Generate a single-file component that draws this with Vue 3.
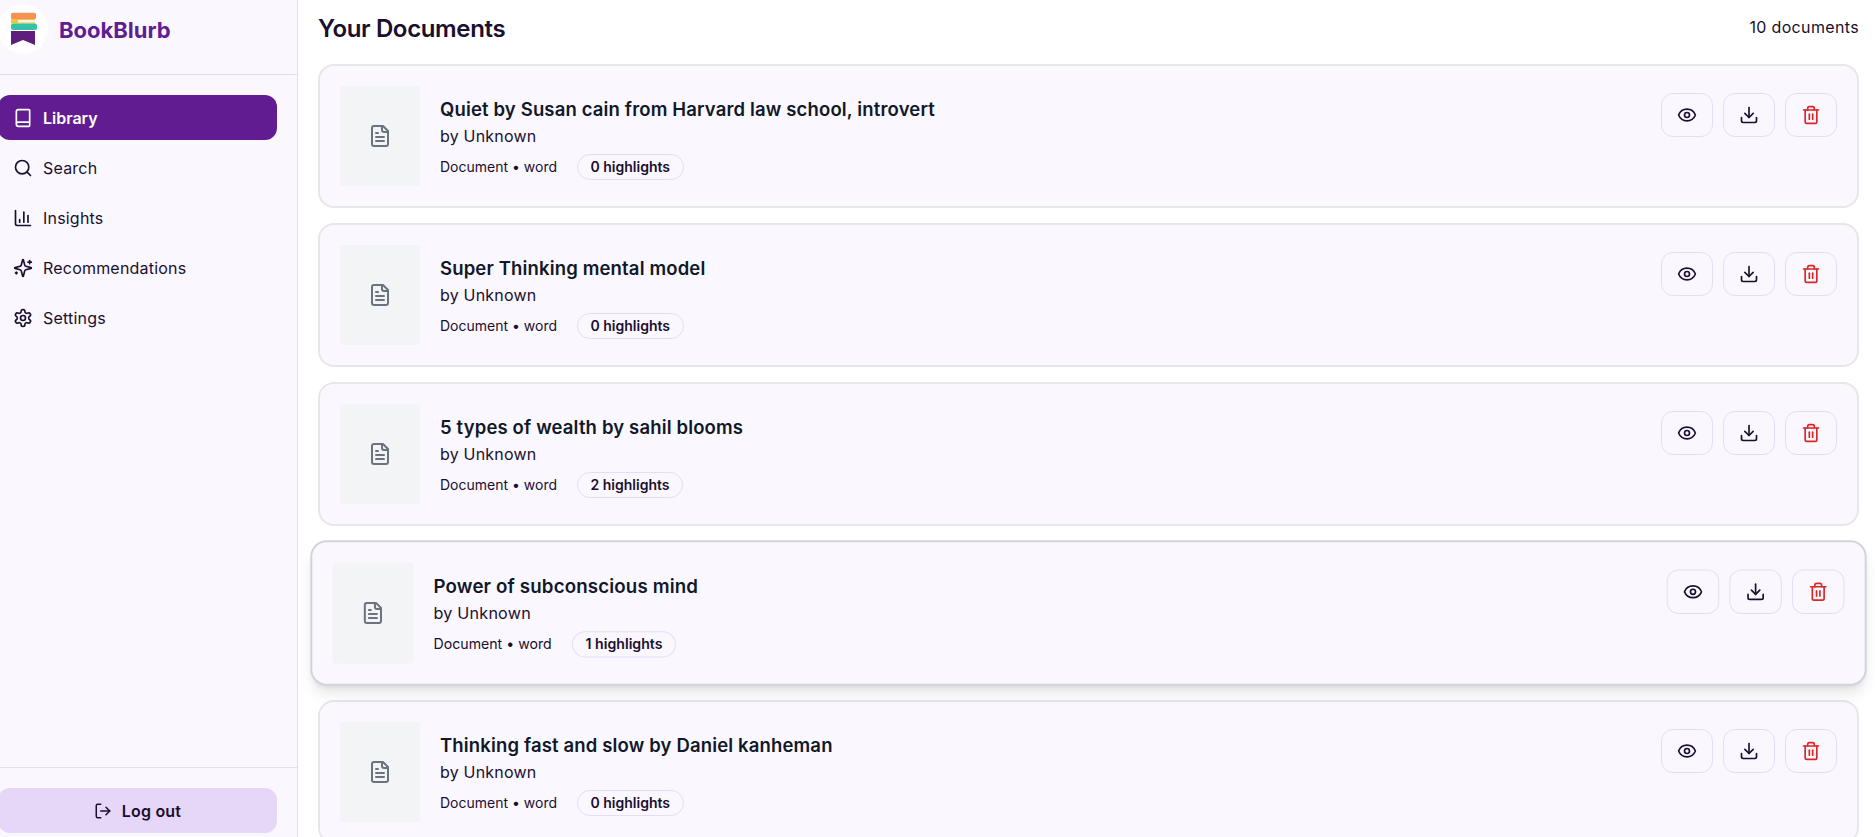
<script setup>
const nav = [
  { label: 'Library', icon: 'book', active: true },
  { label: 'Search', icon: 'search' },
  { label: 'Insights', icon: 'chart' },
  { label: 'Recommendations', icon: 'sparkles' },
  { label: 'Settings', icon: 'settings' }
]

const docs = [
  { title: 'Quiet by Susan cain from Harvard law school, introvert', highlights: 0 },
  { title: 'Super Thinking mental model', highlights: 0 },
  { title: '5 types of wealth by sahil blooms', highlights: 2 },
  { title: 'Power of subconscious mind', highlights: 1, hovered: true },
  { title: 'Thinking fast and slow by Daniel kanheman', highlights: 0 }
]
</script>

<template>
  <div class="layout">
    <aside class="sidebar">
      <div class="brand">
        <div class="logo">
          <svg width="28" height="36" viewBox="0 0 28 36">
            <rect x="2" y="1.700" width="25" height="6.500" rx="1.500" fill="#f79256" />
            <rect x="2" y="8" width="24" height="4.500" rx="1" fill="#f4c430" />
            <rect x="9" y="9" width="17" height="2.500" fill="#f7f3e8" />
            <rect x="2" y="12.500" width="26" height="6.500" rx="2" fill="#35c3a8" />
            <path d="M2 20h24v14l-12-5-12 5z" fill="#5f1d7d" />
          </svg>
        </div>
        <span class="brand-name">BookBlurb</span>
      </div>

      <nav class="nav">
        <a v-for="item in nav" :key="item.label" class="nav-item" :class="{ active: item.active }">
          <svg class="icon" width="20" height="20" viewBox="0 0 24 24">
            <path v-if="item.icon === 'book'" d="M4 19.500v-15A2.500 2.500 0 0 1 6.500 2H19a1 1 0 0 1 1 1v18a1 1 0 0 1-1 1H6.500a1 1 0 0 1 0-5H20" />
            <template v-if="item.icon === 'search'">
              <circle cx="11" cy="11" r="8" />
              <path d="m21 21-4.300-4.300" />
            </template>
            <template v-if="item.icon === 'chart'">
              <path d="M3 3v16a2 2 0 0 0 2 2h16" />
              <path d="M18 17V9" />
              <path d="M13 17V5" />
              <path d="M8 17v-3" />
            </template>
            <template v-if="item.icon === 'sparkles'">
              <path d="M9.937 15.500A2 2 0 0 0 8.500 14.063l-6.135-1.582a.5.5 0 0 1 0-.962L8.500 9.936A2 2 0 0 0 9.937 8.500l1.582-6.135a.5.5 0 0 1 .963 0L14.063 8.500A2 2 0 0 0 15.500 9.937l6.135 1.581a.5.5 0 0 1 0 .964L15.500 14.063a2 2 0 0 0-1.437 1.437l-1.582 6.135a.5.5 0 0 1-.963 0z" />
              <path d="M20 3v4" />
              <path d="M22 5h-4" />
              <path d="M4 17v2" />
              <path d="M5 18H3" />
            </template>
            <template v-if="item.icon === 'settings'">
              <path d="M12.220 2h-.44a2 2 0 0 0-2 2v.18a2 2 0 0 1-1 1.730l-.43.25a2 2 0 0 1-2 0l-.15-.08a2 2 0 0 0-2.730.73l-.22.38a2 2 0 0 0 .73 2.730l.15.1a2 2 0 0 1 1 1.720v.51a2 2 0 0 1-1 1.740l-.15.09a2 2 0 0 0-.73 2.730l.22.38a2 2 0 0 0 2.730.73l.15-.08a2 2 0 0 1 2 0l.43.25a2 2 0 0 1 1 1.730V20a2 2 0 0 0 2 2h.44a2 2 0 0 0 2-2v-.18a2 2 0 0 1 1-1.730l.43-.25a2 2 0 0 1 2 0l.15.08a2 2 0 0 0 2.730-.73l.22-.39a2 2 0 0 0-.73-2.730l-.15-.08a2 2 0 0 1-1-1.740v-.5a2 2 0 0 1 1-1.740l.15-.09a2 2 0 0 0 .73-2.730l-.22-.38a2 2 0 0 0-2.730-.73l-.15.08a2 2 0 0 1-2 0l-.43-.25a2 2 0 0 1-1-1.730V4a2 2 0 0 0-2-2z" />
              <circle cx="12" cy="12" r="3" />
            </template>
          </svg>
          <span>{{ item.label }}</span>
        </a>
      </nav>

      <div class="sidebar-footer">
        <button type="button" class="logout">
          <svg class="icon" width="18" height="18" viewBox="0 0 24 24">
            <path d="M9 21H5a2 2 0 0 1-2-2V5a2 2 0 0 1 2-2h4" />
            <path d="m16 17 5-5-5-5" />
            <path d="M21 12H9" />
          </svg>
          Log out
        </button>
      </div>
    </aside>

    <main class="main">
      <header class="main-head">
        <h1>Your Documents</h1>
        <span class="count">10 documents</span>
      </header>

      <div class="doc-list">
        <article v-for="doc in docs" :key="doc.title" class="doc" :class="{ hovered: doc.hovered }">
          <div class="thumb">
            <svg class="icon" width="24" height="24" viewBox="0 0 24 24">
              <path d="M15 2H6a2 2 0 0 0-2 2v16a2 2 0 0 0 2 2h12a2 2 0 0 0 2-2V7Z" />
              <path d="M14 2v4a2 2 0 0 0 2 2h4" />
              <path d="M10 9H8" />
              <path d="M16 13H8" />
              <path d="M16 17H8" />
            </svg>
          </div>
          <div class="info">
            <h3>{{ doc.title }}</h3>
            <p class="author">by Unknown</p>
            <div class="meta">
              <span>Document • word</span>
              <span class="pill">{{ doc.highlights }} highlights</span>
            </div>
          </div>
          <div class="actions">
            <button type="button" class="action">
              <svg class="icon" width="20" height="20" viewBox="0 0 24 24">
                <path d="M2.062 12.348a1 1 0 0 1 0-.696 10.750 10.750 0 0 1 19.876 0 1 1 0 0 1 0 .696 10.750 10.750 0 0 1-19.876 0" />
                <circle cx="12" cy="12" r="3" />
              </svg>
            </button>
            <button type="button" class="action">
              <svg class="icon" width="20" height="20" viewBox="0 0 24 24">
                <path d="M12 15V3" />
                <path d="M21 15v4a2 2 0 0 1-2 2H5a2 2 0 0 1-2-2v-4" />
                <path d="m7 10 5 5 5-5" />
              </svg>
            </button>
            <button type="button" class="action danger">
              <svg class="icon" width="20" height="20" viewBox="0 0 24 24">
                <path d="M3 6h18" />
                <path d="M19 6v14c0 1-1 2-2 2H7c-1 0-2-1-2-2V6" />
                <path d="M8 6V4c0-1 1-2 2-2h4c1 0 2 1 2 2v2" />
                <path d="M10 11v6" />
                <path d="M14 11v6" />
              </svg>
            </button>
          </div>
        </article>
      </div>
    </main>
  </div>
</template>

<style>
html, body { margin: 0; height: 100%; overflow: hidden; background: #fff; }
</style>

<style scoped>
.layout { display: flex; height: 837px; overflow: hidden; font-family: Inter, "Noto Sans", sans-serif; color: #1a0f2e; }
.icon { fill: none; stroke: currentColor; stroke-width: 2; stroke-linecap: round; stroke-linejoin: round; flex-shrink: 0; }

.sidebar { width: 297px; flex-shrink: 0; display: flex; flex-direction: column; background: #faf7ff; border-right: 1px solid #e7dcf7; }
.brand { height: 74px; display: flex; align-items: flex-start; gap: 11px; border-bottom: 1px solid #e7dcf7; margin-left: -2px; }
.logo { width: 50px; height: 50px; margin-top: 4px; border-radius: 50%; background: #fff; display: flex; align-items: center; justify-content: center; }
.brand-name { margin-top: 17px; font-size: 22px; line-height: 27px; font-weight: 700; color: #611c92; }

.nav { flex: 1; display: flex; flex-direction: column; gap: 5px; padding-top: 20px; margin-left: -2px; }
.nav-item { width: 279px; height: 45px; box-sizing: border-box; display: flex; align-items: center; gap: 10px; padding-left: 15px; border-radius: 12px; font-size: 16px; letter-spacing: .2px; }
.nav-item span { padding-top: 1px; }
.nav-item.active { background: #611c92; color: #fff; font-weight: 600; letter-spacing: 0; }

.sidebar-footer { height: 70px; box-sizing: border-box; padding-top: 20px; border-top: 1px solid #e7dcf7; margin-left: -2px; }
.logout { width: 279px; height: 45px; display: flex; align-items: center; justify-content: center; gap: 10px; border: 0; border-radius: 12px; background: #e6d6f7; color: #1a0f2e; font-family: inherit; font-size: 16px; font-weight: 600; letter-spacing: .2px; }

.main { flex: 1; min-width: 0; padding: 0 16px 0 20px; background: #fff; }
.main-head { height: 64px; display: flex; justify-content: space-between; align-items: flex-start; }
.main-head h1 { margin: 13px 0 0; font-size: 24px; line-height: 32px; font-weight: 600; letter-spacing: -.35px; color: #1a0f2e; }
.count { margin-top: 15px; font-size: 16px; line-height: 24px; letter-spacing: .35px; }

.doc-list { display: flex; flex-direction: column; gap: 15px; }
.doc { flex-shrink: 0; display: flex; gap: 20px; padding: 20px; border: 2px solid #e5e7eb; border-radius: 16px; background: #faf7ff; }
.doc.hovered { transform: scale(1.01); border-color: #d1d5db; box-shadow: 0 10px 15px -3px rgba(0, 0, 0, .1), 0 4px 6px -4px rgba(0, 0, 0, .1); }
.thumb { width: 80px; height: 100px; flex-shrink: 0; display: flex; align-items: center; justify-content: center; border-radius: 4px; background: #f3f4f6; color: #6b7280; }
.info { flex: 1; min-width: 0; padding-top: 9px; }
.info h3 { margin: 0; font-size: 18.500px; line-height: 28px; font-weight: 600; letter-spacing: .15px; color: #111827; }
.author { margin: 1px 0 0; font-size: 16px; line-height: 24px; letter-spacing: .2px; }
.meta { margin-top: 6px; display: flex; align-items: center; gap: 20px; font-size: 14px; line-height: 20px; }
.pill { padding: 2px 12.500px; border: 1px solid #e7dcf7; border-radius: 999px; font-weight: 600; }

.actions { display: flex; gap: 10px; align-items: flex-start; padding-top: 7px; }
.action { width: 52px; height: 44px; display: flex; align-items: center; justify-content: center; padding: 0; border: 1px solid #e7dcf7; border-radius: 12px; background: #faf7ff; color: #1a0f2e; }
.action.danger { color: #dc2626; }
</style>
